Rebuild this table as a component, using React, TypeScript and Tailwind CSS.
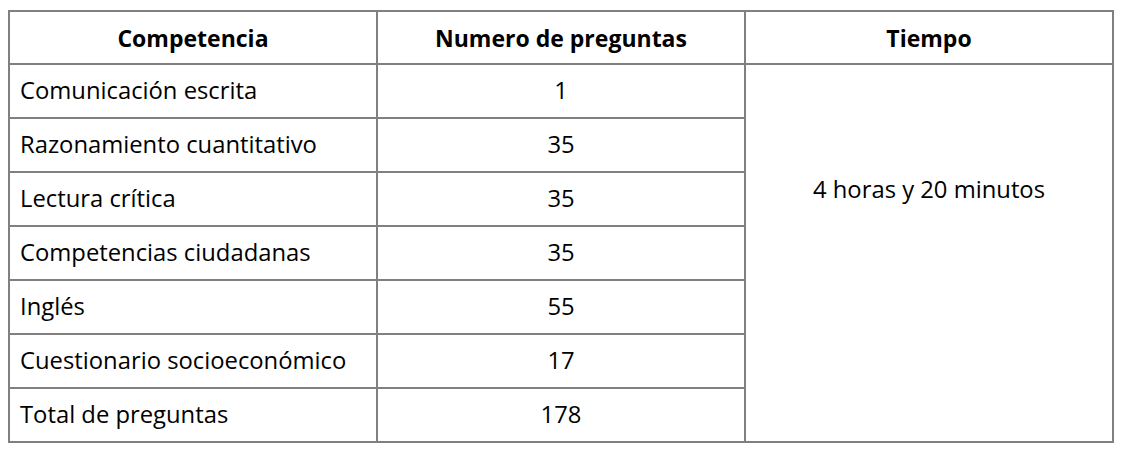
const rows = [
  { name: "Comunicación escrita", count: "1" },
  { name: "Razonamiento cuantitativo", count: "35" },
  { name: "Lectura crítica", count: "35" },
  { name: "Competencias ciudadanas", count: "35" },
  { name: "Inglés", count: "55" },
  { name: "Cuestionario socioeconómico", count: "17" },
  { name: "Total de preguntas", count: "178" },
];

export default function App() {
  return (
    <div className="h-[452px] w-[1124px] bg-white pl-[8px] pt-[10px] font-['Open_Sans',sans-serif] text-black">
      <table className="w-[1104px] table-fixed border-collapse text-[23.8px]">
        <colgroup>
          <col className="w-[368px]" />
          <col className="w-[368px]" />
          <col className="w-[368px]" />
        </colgroup>
        <thead>
          <tr className="h-[53px]">
            <th className="border-2 border-[#808080] pt-[2px] text-center text-[23px] font-bold">Competencia</th>
            <th className="border-2 border-[#808080] pt-[2px] text-center text-[23px] font-bold">Numero de preguntas</th>
            <th className="border-2 border-[#808080] pt-[2px] text-center text-[23px] font-bold">Tiempo</th>
          </tr>
        </thead>
        <tbody>
          {rows.map((row, i) => (
            <tr key={row.name} className="h-[54px]">
              <td className="border-2 border-[#808080] pl-[10px] text-left">{row.name}</td>
              <td className="border-2 border-[#808080] text-center">{row.count}</td>
              {i === 0 && (
                <td rowSpan={7} className="border-2 border-[#808080] pb-[126px] text-center">
                  4 horas y 20 minutos
                </td>
              )}
            </tr>
          ))}
        </tbody>
      </table>
    </div>
  );
}
